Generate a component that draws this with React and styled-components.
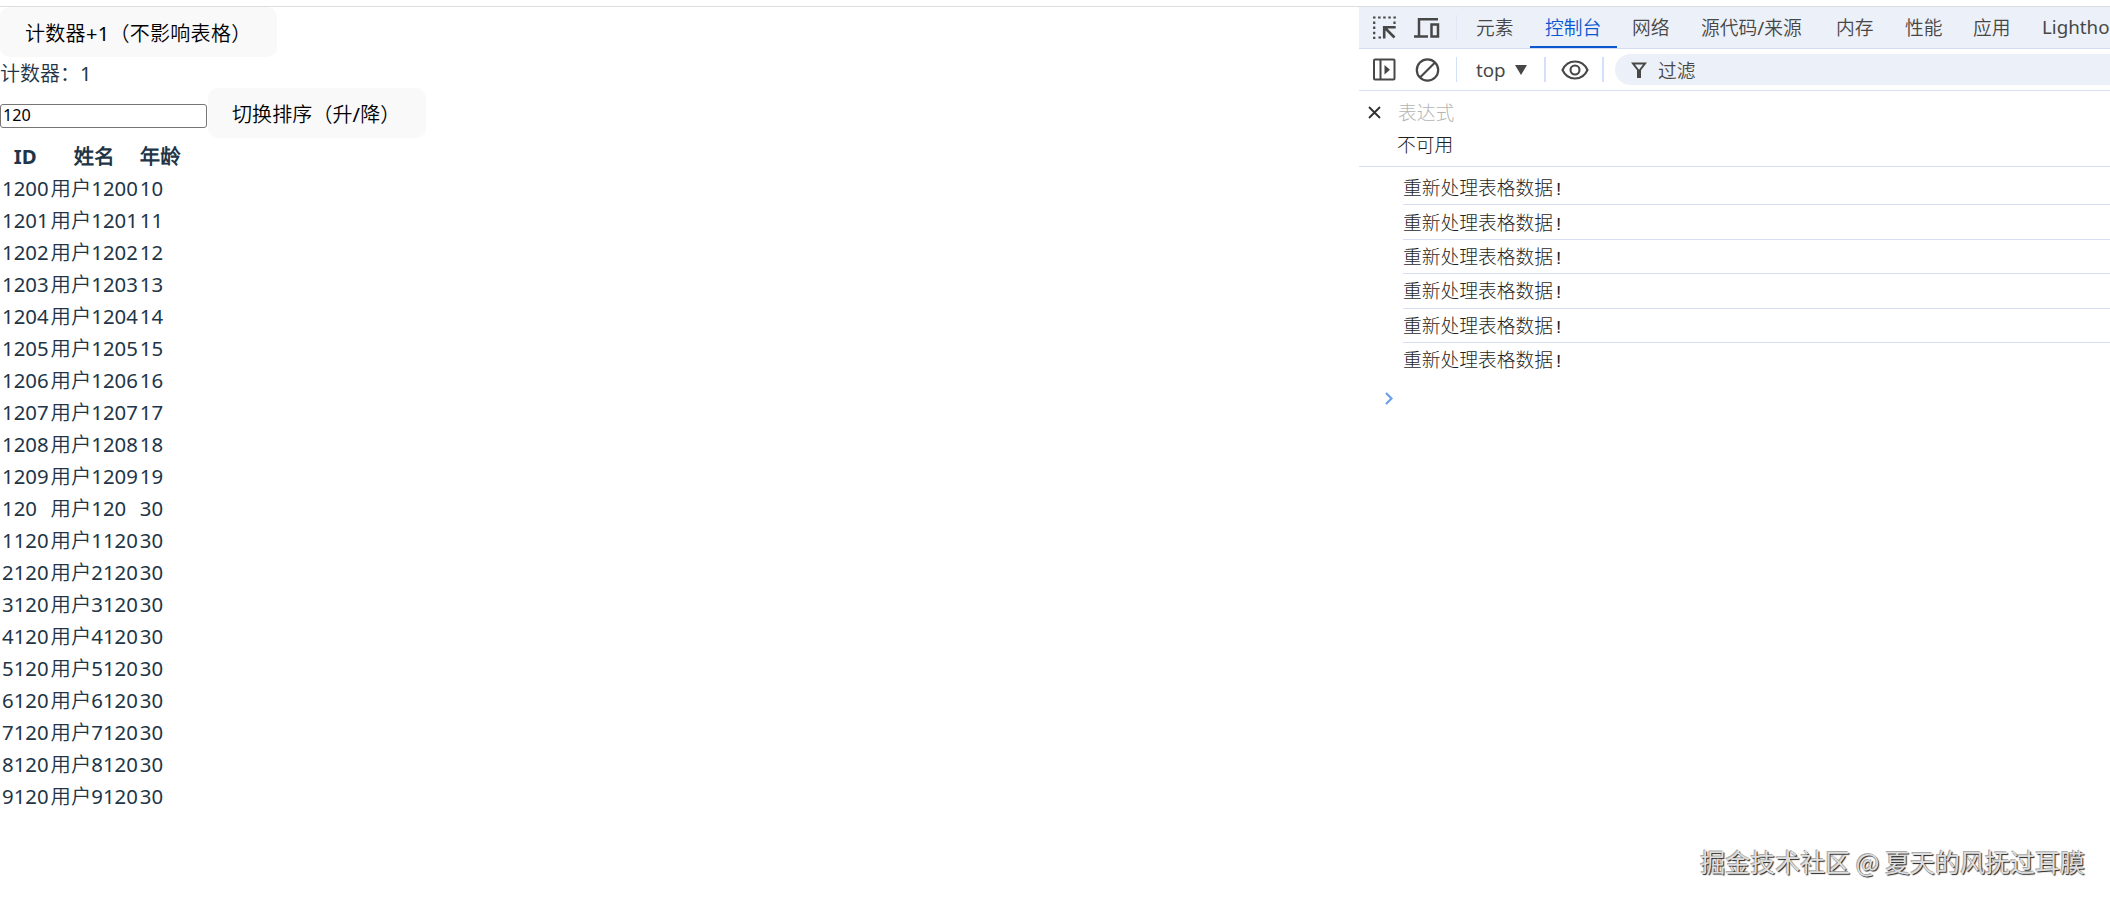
import React, { useState } from "react";
import styled, { createGlobalStyle } from "styled-components";

const GlobalStyle = createGlobalStyle`
    * {
        box-sizing: border-box;
    }
    body {
        margin: 0;
        background-color: #fff;
        overflow: hidden;
    }
`;

const uiFont = `"Noto Sans", "Noto Sans CJK SC DemiLight", "Noto Sans CJK SC Light", "Noto Sans CJK SC", sans-serif`;

const Page = styled.div`
    position: relative;
    display: flex;
    height: 900px;
    padding-top: 6px;
    overflow: hidden;
    font-family: ${uiFont};
`;

const Demo = styled.main`
    flex: 0 0 1359px;
    border-top: 1px solid #dcdde0;
    color: #213547;
    font-size: 20px;
    line-height: 30px;
`;

const Button = styled.button`
    display: block;
    width: ${({ $width }) => $width}px;
    height: 50px;
    margin: 0;
    padding: 0 0 0 ${({ $indent }) => $indent}px;
    border: 0;
    border-radius: 10px;
    background-color: #f9f9f9;
    color: #000;
    font-family: ${uiFont};
    font-size: 20px;
    letter-spacing: ${({ $spacing }) => $spacing}px;
    text-align: left;
    white-space: nowrap;
`;

const Counter = styled.div`
    height: 31px;
    padding-top: 2px;
`;

const SearchRow = styled.div`
    display: flex;
    align-items: center;
    gap: 1px;
    height: 50px;
`;

const SearchInput = styled.input`
    width: 207px;
    height: 24px;
    margin-top: 5px;
    padding: 0 2px 1px;
    border: 1px solid #767676;
    border-radius: 3px;
    color: #000;
    font-family: "Noto Sans", sans-serif;
    font-size: 16.2px;
`;

const Table = styled.table`
    border-collapse: separate;
    border-spacing: 2px 0;
    margin-top: 2px;
    font-size: 20.35px;

    th,
    td {
        height: 32px;
        padding: 0;
        line-height: 30px;
        white-space: nowrap;
    }
`;

const DevTools = styled.aside`
    flex: 1;
    min-width: 0;
    border-top: 1px solid #dcdde0;
    color: #474747;
    font-size: 18.75px;
`;

const TabBar = styled.div`
    display: flex;
    align-items: center;
    height: 42px;
    padding-left: 14px;
    border-bottom: 1px solid #d3dcf5;
    background-color: #ecf1f9;
    overflow: hidden;
`;

const IconSlot = styled.span`
    display: flex;
    flex: none;
    width: ${({ $width }) => $width}px;
`;

const Separator = styled.span`
    flex: none;
    width: ${({ $bold }) => ($bold ? 2 : 1)}px;
    height: 25px;
    margin-right: ${({ $after }) => $after}px;
    background-color: ${({ $faint }) => ($faint ? "#dfe7f5" : "#d3e0fa")};
`;

const Tab = styled.span`
    display: flex;
    flex: none;
    align-items: center;
    width: ${({ $width }) => $width}px;
    height: 42px;
    padding-left: 15px;
    padding-top: 1px;
    border-bottom: 3px solid ${({ $active }) => ($active ? "#0b57d0" : "transparent")};
    border-radius: 3px 3px 0 0;
    color: ${({ $active }) => ($active ? "#0b57d0" : "#474747")};
    white-space: nowrap;
`;

const Toolbar = styled.div`
    display: flex;
    align-items: center;
    height: 42px;
    padding-left: 14px;
    border-bottom: 1px solid #d8def2;
`;

const Context = styled.span`
    display: flex;
    flex: none;
    align-items: center;
    gap: 9px;
    width: 68px;
`;

const Filter = styled.div`
    display: flex;
    flex: 1;
    align-items: center;
    gap: 11px;
    height: 31px;
    padding-left: 16px;
    border-radius: 16px 0 0 16px;
    background-color: #ecf1f9;
`;

const Expression = styled.section`
    display: grid;
    grid-template-columns: 30px 1fr;
    grid-template-rows: 32px 32px;
    align-items: center;
    height: 76px;
    padding: 5px 0 0 9px;
    border-bottom: 1px solid #d8def2;
    font-family: "Liberation Mono", "Noto Sans CJK SC", monospace;
    font-weight: 300;
`;

const Placeholder = styled.span`
    color: #b5b5b5;
`;

const Unavailable = styled.span`
    grid-column: 2;
    margin-left: -1px;
    color: #202020;
`;

const Logs = styled.ul`
    margin: 4px 0 0 44px;
    padding: 0;
    list-style: none;
`;

const Log = styled.li`
    display: flex;
    align-items: center;
    height: 34.4px;
    padding-bottom: 1px;
    border-bottom: 1px solid ${({ $last }) => ($last ? "transparent" : "#d8def2")};
    color: #1f1f1f;
    font-family: "Liberation Mono", "Noto Sans CJK SC", monospace;
    font-size: 18.75px;
    font-weight: 300;
`;

const Prompt = styled.div`
    padding: 15px 0 0 26px;
    line-height: 0;
`;

const Watermark = styled.div`
    position: absolute;
    right: 25px;
    bottom: 21px;
    color: #dedede;
    font-family: "Noto Sans CJK SC", sans-serif;
    font-size: 25px;
    line-height: 36px;
    text-shadow: 1px 1px 1px #222, -1px -1px 0 #aaa;
    white-space: nowrap;
`;

const InspectIcon = () => (
    <svg width="23" height="23" viewBox="0 0 23 23" fill="none" stroke="#474747" strokeWidth="2.2">
        <path d="M0 1.5h23" strokeDasharray="2.5 2.6" />
        <path d="M1.2 5.5V23M21.5 5.5v3M5.5 21.5h3" strokeDasharray="2.5 2.6" />
        <path d="M21.5 21.5L11.5 11.5M11.2 22.5V11.2h11.5" strokeWidth="2.6" />
    </svg>
);

const DeviceIcon = () => (
    <svg width="26" height="22" viewBox="0 0 26 22" fill="none" stroke="#474747" strokeWidth="2.5">
        <path d="M24 2.2H5v16M0 19.5h14" />
        <path d="M17.5 7.5h6.5v12h-6.5z" />
    </svg>
);

const SidebarIcon = () => (
    <svg width="23" height="23" viewBox="0 0 23 23" fill="none" stroke="#474747" strokeWidth="2">
        <rect x="1" y="1.5" width="20.5" height="20" rx="1" />
        <path d="M7.5 1v21" />
        <path d="M11.5 7v9.5l5.5-4.7z" fill="#474747" stroke="none" />
    </svg>
);

const ClearIcon = () => (
    <svg width="26" height="26" viewBox="0 0 26 26" fill="none" stroke="#474747" strokeWidth="2.2">
        <circle cx="12.5" cy="13" r="10.7" />
        <path d="M20 5.5l-15 15" />
    </svg>
);

const ArrowIcon = () => (
    <svg width="12" height="10" viewBox="0 0 12 10">
        <path d="M0 0h12L6 10z" fill="#474747" />
    </svg>
);

const EyeIcon = () => (
    <svg width="28" height="20" viewBox="0 0 28 20" fill="none" stroke="#474747" strokeWidth="2.1">
        <path d="M1.5 10C4 4.5 8.5 1.5 14 1.5S24 4.5 26.5 10C24 15.5 19.5 18.5 14 18.5S4 15.5 1.5 10z" />
        <circle cx="14" cy="10" r="4.5" />
    </svg>
);

const FilterIcon = () => (
    <svg width="16" height="16" viewBox="0 0 16 16" fill="none" stroke="#474747" strokeWidth="2">
        <path d="M2 1.5h12L9 8v7H7V8z" />
    </svg>
);

const CloseIcon = () => (
    <svg width="13" height="13" viewBox="0 0 13 13" fill="none" stroke="#303030" strokeWidth="1.8">
        <path d="M1 1l11 11M12 1L1 12" />
    </svg>
);

const PromptIcon = () => (
    <svg width="8" height="13" viewBox="0 0 8 13" fill="none" stroke="#6ba0e8" strokeWidth="2.2">
        <path d="M1 1l5.5 5.5L1 12" />
    </svg>
);

const tabs = [
    { label: "元素", width: 69 },
    { label: "控制台", width: 87, active: true },
    { label: "网络", width: 69 },
    { label: "源代码/来源", width: 135 },
    { label: "内存", width: 69 },
    { label: "性能", width: 68 },
    { label: "应用", width: 69 },
    { label: "Lighthouse", width: 130 },
];

const users = [
    ...Array.from({ length: 10 }, (_, i) => ({ id: 1200 + i, age: 10 + i })),
    ...Array.from({ length: 10 }, (_, i) => ({ id: i * 1000 + 120, age: 30 })),
];

const logs = Array(6).fill("重新处理表格数据!");

const App = () => {
    const [count, setCount] = useState(1);
    const [keyword, setKeyword] = useState("120");

    return (
        <Page>
            <GlobalStyle />
            <Demo>
                <Button $width={277} $indent={25} $spacing={0.3} onClick={() => setCount(count + 1)}>
                    计数器+1（不影响表格）
                </Button>
                <Counter>计数器：{count}</Counter>
                <SearchRow>
                    <SearchInput value={keyword} onChange={(e) => setKeyword(e.target.value)} />
                    <Button $width={218} $indent={24} $spacing={0.1}>切换排序（升/降）</Button>
                </SearchRow>
                <Table>
                    <thead>
                        <tr>
                            <th>ID</th>
                            <th>姓名</th>
                            <th>年龄</th>
                        </tr>
                    </thead>
                    <tbody>
                        {users.map(({ id, age }) => (
                            <tr key={id}>
                                <td>{id}</td>
                                <td>用户{id}</td>
                                <td>{age}</td>
                            </tr>
                        ))}
                    </tbody>
                </Table>
            </Demo>
            <DevTools>
                <TabBar>
                    <IconSlot $width={41}><InspectIcon /></IconSlot>
                    <IconSlot $width={42}><DeviceIcon /></IconSlot>
                    <Separator $faint $after={4} />
                    {tabs.map(({ label, width, active }) => (
                        <Tab key={label} $width={width} $active={active}>{label}</Tab>
                    ))}
                </TabBar>
                <Toolbar>
                    <IconSlot $width={42}><SidebarIcon /></IconSlot>
                    <IconSlot $width={41}><ClearIcon /></IconSlot>
                    <Separator $after={19} />
                    <Context>top <ArrowIcon /></Context>
                    <Separator $bold $after={15} />
                    <IconSlot $width={41}><EyeIcon /></IconSlot>
                    <Separator $bold $after={11} />
                    <Filter><FilterIcon />过滤</Filter>
                </Toolbar>
                <Expression>
                    <CloseIcon />
                    <Placeholder>表达式</Placeholder>
                    <Unavailable>不可用</Unavailable>
                </Expression>
                <Logs>
                    {logs.map((text, i) => (
                        <Log key={i} $last={i === logs.length - 1}>{text}</Log>
                    ))}
                </Logs>
                <Prompt><PromptIcon /></Prompt>
            </DevTools>
            <Watermark>掘金技术社区 @ 夏天的风抚过耳膜</Watermark>
        </Page>
    );
};

export default App;
